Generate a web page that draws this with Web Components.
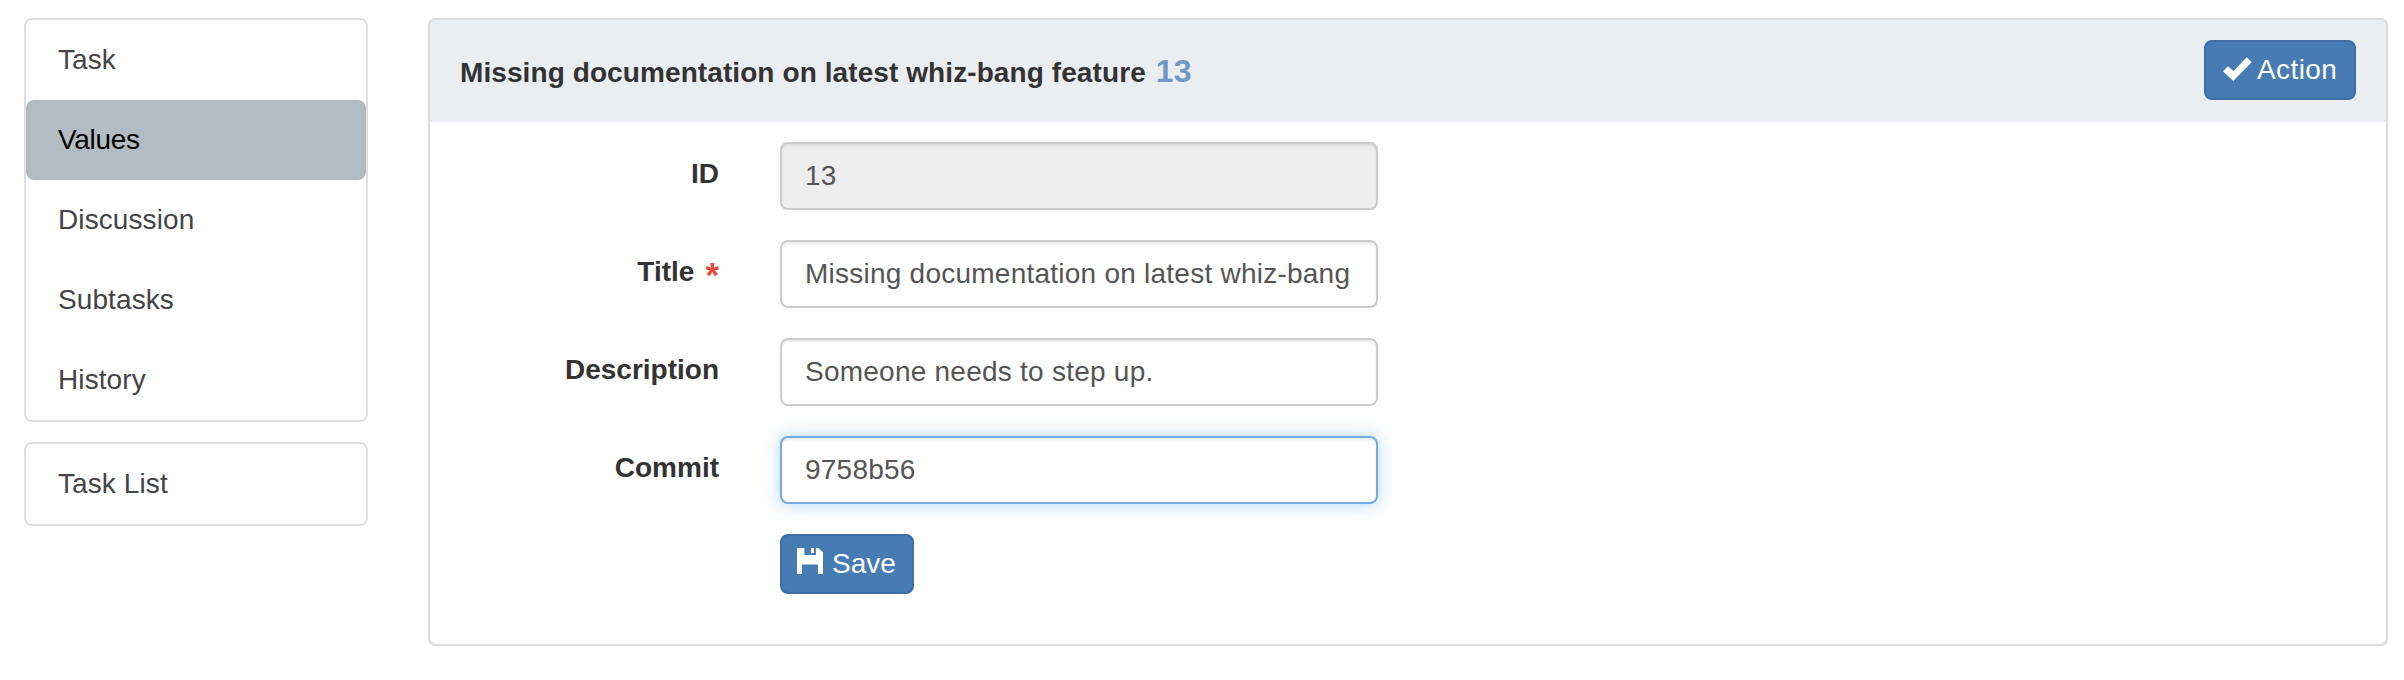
<!DOCTYPE html>
<html lang="en">
<head>
<meta charset="utf-8">
<title>Task values</title>
<style>
html,body{margin:0;background:#fefefe}
body{font-family:"Liberation Sans",Arial,sans-serif;font-size:28px;line-height:40px;color:#333}
</style>
</head>
<body>
<task-page>
  <nav-card slot="side">
    <nav-item>Task</nav-item>
    <nav-item active>Values</nav-item>
    <nav-item>Discussion</nav-item>
    <nav-item>Subtasks</nav-item>
    <nav-item>History</nav-item>
  </nav-card>
  <nav-card slot="side"><nav-item>Task List</nav-item></nav-card>
  <task-panel>
    <span slot="title">Missing documentation on latest whiz-bang feature</span>
    <span slot="number">13</span>
    <icon-button slot="action" icon="check">Action</icon-button>
    <form-field label="ID" disabled>13</form-field>
    <form-field label="Title" required>Missing documentation on latest whiz-bang</form-field>
    <form-field label="Description">Someone needs to step up.</form-field>
    <form-field label="Commit" focused>9758b56</form-field>
    <icon-button class="save" icon="save">Save</icon-button>
  </task-panel>
</task-page>
<script>
const define = (name, render) => customElements.define(name, class extends HTMLElement {
  constructor() { super(); this.attachShadow({mode: 'open'}); }
  connectedCallback() { this.shadowRoot.innerHTML = render(this); }
});

define('task-page', () => `<style>
:host{display:grid;grid-template-columns:344px 1960px;column-gap:60px;padding:18px 16px 0 24px;box-sizing:border-box;align-items:start}
aside{display:flex;flex-direction:column;gap:20px}
</style><aside><slot name="side"></slot></aside><main><slot></slot></main>`);

define('nav-card', () => `<style>
:host{display:block;border:2px solid #e0e0e0;border-radius:8px;background:#fefefe}
</style><slot></slot>`);

define('nav-item', () => `<style>
:host{display:block;height:80px;box-sizing:border-box;padding:20px 32px;border-radius:8px;color:#444447;letter-spacing:.1px}
:host([active]){background:#b2bdc3;color:#000;letter-spacing:-.3px}
</style><slot></slot>`);

define('task-panel', () => `<style>
:host{display:block;height:628px;box-sizing:border-box;border:2px solid #dcdcdc;border-radius:8px;background:#fefefe;box-shadow:0 2px 2px rgba(0,0,0,.05)}
header{display:flex;justify-content:space-between;align-items:flex-start;height:102px;box-sizing:border-box;padding:20px 30px;background:#ebeef1;border-radius:6px 6px 0 0}
h2{margin:11px 0 0;font-size:28px;line-height:40px;font-weight:700;color:#333;white-space:nowrap;letter-spacing:.09px}
.n{font-size:32px;color:#6f98c7;margin-left:10px}
.body{display:flex;flex-direction:column;gap:30px;padding-top:20px}
::slotted(.save){margin-left:350px;align-self:flex-start}
</style><header><h2><slot name="title"></slot><span class="n"><slot name="number"></slot></span></h2><slot name="action"></slot></header>
<div class="body"><slot></slot></div>`);

define('form-field', el => `<style>
:host{display:grid;grid-template-columns:289px 598px;column-gap:61px;height:68px}
label{text-align:right;font-weight:700;padding-top:12px;white-space:nowrap}
i{font-style:normal;color:#e74c3c;margin-left:11px;font-size:35px;line-height:0;vertical-align:-6px}
.box{box-sizing:border-box;height:68px;padding:12px 22px 12px 23px;border:2px solid #ccc;border-radius:8px;background:#fefefe;color:#555;white-space:nowrap;overflow:hidden;letter-spacing:.24px;box-shadow:inset 0 2px 2px rgba(0,0,0,.075)}
:host([disabled]) .box{background:#eee}
:host([focused]) .box{border-color:#73abe3;box-shadow:inset 0 2px 2px rgba(0,0,0,.075),0 0 16px rgba(102,175,233,.5)}
.box span{display:block}
</style><label>${el.getAttribute('label')}${el.hasAttribute('required') ? '<i>*</i>' : ''}</label>
<div class="box"><span><slot></slot></span></div>`);

const icons = {
  check: '<svg width="29" height="24" viewBox="0 0 29 24"><path fill="#fff" d="M0 14.2 5 9.3 10.3 14 23.8.2 28.7 5.2 10.2 24Z"/></svg>',
  save: '<svg width="26" height="26" viewBox="0 0 26 26"><path fill="#fff" fill-rule="evenodd" d="M0 0H7.4V7H19V0H21.5L26 4.4V26H21V16.5H5V26H0ZM14 0H17V5H14Z"/></svg>'
};
define('icon-button', el => `<style>
:host{display:inline-flex;box-sizing:border-box;height:60px;border:2px solid #3d6fa6;border-radius:8px;background:#467bb4;color:#fff;line-height:40px;white-space:nowrap}
:host([icon=check]){width:152px;padding:8px 0 0 17px;letter-spacing:.4px}
:host([icon=save]){width:134px;padding:8px 0 0 15px}
svg{display:block;flex:none}
:host([icon=check]) svg{margin:7px 5px 0 0}
:host([icon=save]) svg{margin:4px 9px 0 0}
</style>${icons[el.getAttribute('icon')]}<slot></slot>`);
</script>
</body>
</html>
